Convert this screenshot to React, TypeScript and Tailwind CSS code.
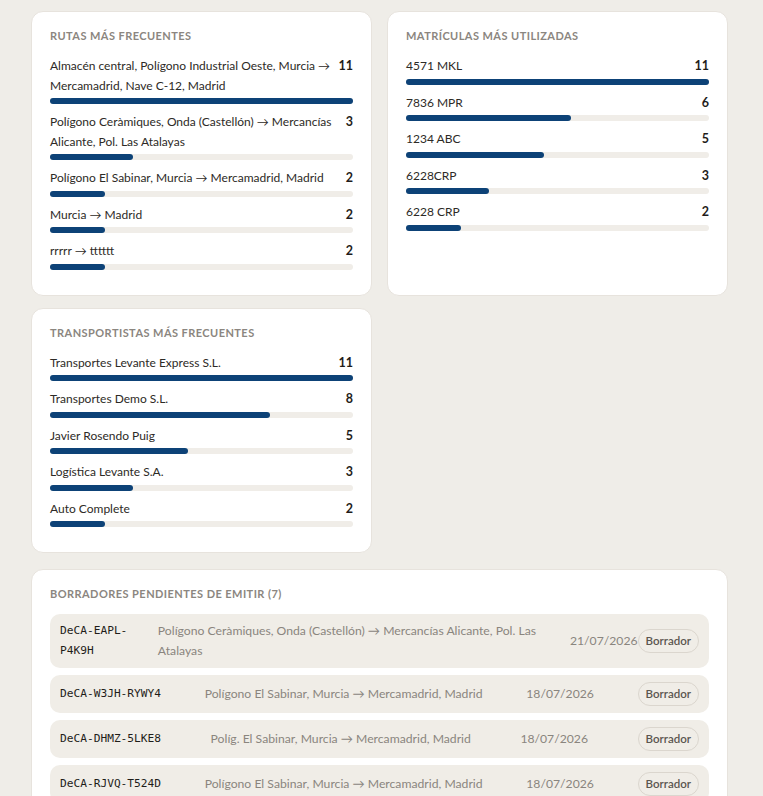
const routes = [
  { label: 'Almacén central, Polígono Industrial Oeste, Murcia → Mercamadrid, Nave C-12, Madrid', count: 11 },
  { label: 'Polígono Ceràmiques, Onda (Castellón) → Mercancías Alicante, Pol. Las Atalayas', count: 3 },
  { label: 'Polígono El Sabinar, Murcia → Mercamadrid, Madrid', count: 2 },
  { label: 'Murcia → Madrid', count: 2 },
  { label: 'rrrrr → tttttt', count: 2 },
];

const plates = [
  { label: '4571 MKL', count: 11 },
  { label: '7836 MPR', count: 6 },
  { label: '1234 ABC', count: 5 },
  { label: '6228CRP', count: 3 },
  { label: '6228 CRP', count: 2 },
];

const carriers = [
  { label: 'Transportes Levante Express S.L.', count: 11 },
  { label: 'Transportes Demo S.L.', count: 8 },
  { label: 'Javier Rosendo Puig', count: 5 },
  { label: 'Logística Levante S.A.', count: 3 },
  { label: 'Auto Complete', count: 2 },
];

const drafts = [
  { code: 'DeCA-EAPL-P4K9H', route: 'Polígono Ceràmiques, Onda (Castellón) → Mercancías Alicante, Pol. Las Atalayas', date: '21/07/2026' },
  { code: 'DeCA-W3JH-RYWY4', route: 'Polígono El Sabinar, Murcia → Mercamadrid, Madrid', date: '18/07/2026' },
  { code: 'DeCA-DHMZ-5LKE8', route: 'Políg. El Sabinar, Murcia → Mercamadrid, Madrid', date: '18/07/2026' },
  { code: 'DeCA-RJVQ-T524D', route: 'Polígono El Sabinar, Murcia → Mercamadrid, Madrid', date: '18/07/2026' },
  { code: 'DeCA-K8PN-2QXA7', route: 'Murcia → Madrid', date: '15/07/2026' },
  { code: 'DeCA-M4TR-9WBC1', route: 'rrrrr → tttttt', date: '14/07/2026' },
  { code: 'DeCA-Z7LD-H3FE6', route: 'Almacén central, Polígono Industrial Oeste, Murcia → Mercamadrid, Nave C-12, Madrid', date: '12/07/2026' },
];

type Item = { label: string; count: number };

function Card({ title, children }: { title: string; children: React.ReactNode }) {
  return (
    <div className="rounded-xl border border-[#e7e3dd] bg-white px-[18px] pt-4 pb-[17px]">
      <h3 className="mb-3 text-[11px] font-bold uppercase leading-4 tracking-[0.04em] text-[#8b8680]">{title}</h3>
      {children}
    </div>
  );
}

function RankList({ items }: { items: Item[] }) {
  const max = Math.max(...items.map((i) => i.count));
  return (
    <ul>
      {items.map((item) => (
        <li key={item.label} className="mb-2">
          <div className="flex items-start justify-between gap-2 text-[12px] leading-[19.5px] text-[#2d2a26]">
            <span>{item.label}</span>
            <span className="text-[12.5px] font-bold text-[#1f1d1a]">{item.count}</span>
          </div>
          <div className="mt-[3px] h-[6px] w-full rounded-full bg-[#f0ede8]">
            <div className="h-full rounded-full bg-[#0d4277]" style={{ width: `${(item.count / max) * 100}%` }} />
          </div>
        </li>
      ))}
    </ul>
  );
}

export default function App() {
  return (
    <div className="min-h-screen bg-[#efede8] px-[31px] pt-[11px] pb-8 text-[#2d2a26]" style={{ fontFamily: 'Lato, "Open Sans", sans-serif' }}>
      <div className="w-[697px]">
        <div className="grid grid-cols-2 gap-x-[15px] gap-y-3">
          <Card title="Rutas más frecuentes">
            <RankList items={routes} />
          </Card>
          <Card title="Matrículas más utilizadas">
            <RankList items={plates} />
          </Card>
          <Card title="Transportistas más frecuentes">
            <RankList items={carriers} />
          </Card>
        </div>

        <div className="mt-4 rounded-xl border border-[#e7e3dd] bg-white px-[18px] pt-4 pb-[18px]">
          <h3 className="mb-3 text-[11px] font-bold uppercase leading-4 tracking-[0.04em] text-[#8b8680]">
            Borradores pendientes de emitir ({drafts.length})
          </h3>
          <div className="flex flex-col gap-[7px]">
            {drafts.map((d) => (
              <div key={d.code} className="flex items-center justify-between rounded-[10px] bg-[#f0ede7] px-[10px] py-[7px]">
                <span className="text-[11.2px] leading-5 text-[#1f1d1a]" style={{ fontFamily: '"DejaVu Sans Mono", monospace' }}>
                  {d.code}
                </span>
                <span className="text-[12.2px] leading-5 text-[#8a857e]">{d.route}</span>
                <span className="text-[12.2px] leading-5 text-[#8a857e]">{d.date}</span>
                <button className="h-6 rounded-full border border-[#dbd6ce] px-[7px] text-[11.5px] font-semibold text-[#5b5650]">
                  Borrador
                </button>
              </div>
            ))}
          </div>
        </div>
      </div>
    </div>
  );
}
